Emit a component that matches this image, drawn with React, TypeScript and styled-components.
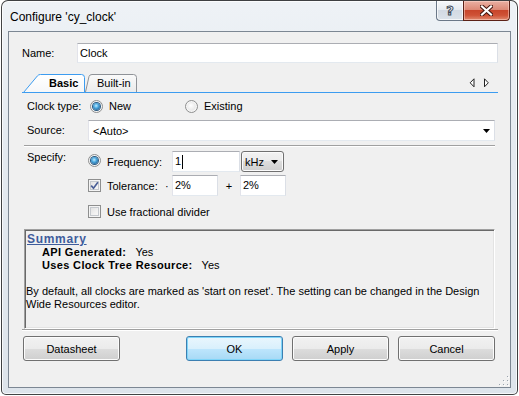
import React from "react";
import styled, { createGlobalStyle, css } from "styled-components";

const GlobalStyle = createGlobalStyle`
  html, body {
    margin: 0;
    padding: 0;
    background: #ffffff;
  }
  body {
    font-family: "Liberation Sans", Arial, sans-serif;
    font-size: 11px;
    color: #000;
  }
  * { box-sizing: border-box; }
`;

const Window = styled.div`
  margin-left: 1px;
  width: 517px;
  height: 395px;
  display: flex;
  flex-direction: column;
  padding: 0 6px 6px 6px;
  border: 1px solid rgba(0, 0, 0, 0.72);
  border-radius: 7px 7px 5px 5px;
  background: linear-gradient(180deg, #eef2f6 0%, #e4eaf0 35%, #dde4eb 100%);
  box-shadow: inset 0 0 0 1px rgba(255, 255, 255, 0.75);
`;

const TitleBar = styled.div`
  height: 30px;
  display: flex;
  align-items: flex-start;
  padding-left: 2px;
`;

const Caption = styled.div`
  margin-top: 8px;
  font-family: "Segoe UI", "Liberation Sans", Arial, sans-serif;
  font-size: 12px;
  line-height: 16px;
  color: #000;
`;

const CaptionButtons = styled.div`
  margin-left: auto;
  margin-right: 1px;
  display: flex;
  height: 20px;
`;

const HelpButton = styled.div`
  width: 27px;
  height: 20px;
  border: 1px solid #6b7888;
  border-top: none;
  border-right: none;
  border-radius: 0 0 0 4px;
  background: linear-gradient(180deg, #f6f8fa 0%, #e6ebf0 45%, #d3dae3 50%, #dce3ea 100%);
  box-shadow: inset 0 0 0 1px rgba(255, 255, 255, 0.7);
  display: flex;
  align-items: center;
  justify-content: center;
  font-family: "DejaVu Sans", sans-serif;
  font-weight: 700;
  font-size: 13px;
  color: #f4f6f8;
  -webkit-text-stroke: 1px #3e4a58;
`;

const CloseButton = styled.div`
  width: 47px;
  height: 20px;
  border: 1px solid #5b2117;
  border-top: none;
  border-radius: 0 0 4px 0;
  background: linear-gradient(180deg, #eab0a3 0%, #dd8a77 45%, #c8452b 50%, #cf5236 75%, #e08a70 100%);
  box-shadow: inset 0 0 0 1px rgba(255, 220, 210, 0.5);
  display: flex;
  align-items: center;
  justify-content: center;
`;

const Client = styled.div`
  position: relative;
  flex: 1;
  display: flex;
  flex-direction: column;
  padding: 0 12px 0 13px;
  border: 1px solid #7c8793;
  background: #f0f0f0;
`;

const NameRow = styled.div`
  margin-top: 11px;
  display: flex;
  align-items: center;
`;

const NameLabel = styled.div`
  width: 55px;
  flex: none;
`;

const TextBox = styled.div<{ $w?: number; $h?: number }>`
  ${(p) => (p.$w ? css`width: ${p.$w}px; flex: none;` : css`flex: 1;`)}
  height: ${(p) => p.$h ?? 21}px;
  display: flex;
  align-items: center;
  padding: 0 2px;
  background: #fff;
  border: 1px solid;
  border-color: #abadb3 #dbdfe6 #e3e9ef #e2e3ea;
  line-height: 13px;
  white-space: nowrap;
`;

const Caret = styled.span`
  display: inline-block;
  width: 1px;
  height: 14px;
  margin-left: 1px;
  background: #000;
`;

const TabStrip = styled.div`
  margin-top: 11px;
  height: 19px;
  padding-left: 1px;
  display: flex;
  align-items: flex-end;
  border-bottom: 1px solid #3c9cf0;
`;

const Tab = styled.div<{ $active?: boolean; $w: number; $pad: number }>`
  position: relative;
  flex: none;
  width: ${(p) => p.$w}px;
  height: 18px;
  padding-left: ${(p) => p.$pad}px;
  line-height: 19px;
  font-weight: ${(p) => (p.$active ? 700 : 400)};
  z-index: ${(p) => (p.$active ? 2 : 1)};

  & > svg {
    position: absolute;
    left: 0;
    top: 0;
    overflow: visible;
  }
  & > span {
    position: relative;
  }
`;

const TabScroll = styled.svg`
  margin-left: auto;
  margin-right: 9px;
  align-self: center;
  flex: none;
`;

const TabBody = styled.div`
  display: flex;
  flex-direction: column;
  padding: 0 3px 0 2px;
`;

const Row = styled.div<{ $top: number; $h: number }>`
  margin-top: ${(p) => p.$top}px;
  height: ${(p) => p.$h}px;
  display: flex;
  align-items: center;
`;

const RowLabel = styled.div<{ $top?: boolean }>`
  width: 64px;
  flex: none;
  padding-left: 3px;
  line-height: 13px;
  ${(p) => p.$top && css`align-self: flex-start;`}
`;

const Choice = styled.div<{ $w?: number }>`
  display: flex;
  align-items: center;
  padding-left: 2px;
  ${(p) => p.$w && css`width: ${p.$w}px; flex: none;`}
`;

const ChoiceText = styled.span`
  margin-left: 6px;
`;

const Radio = styled.span<{ $checked?: boolean; $lift?: number }>`
  position: relative;
  flex: none;
  width: 13px;
  height: 13px;
  margin-bottom: ${(p) => p.$lift ?? 0}px;
  border-radius: 50%;
  border: 1px solid #8e8f8f;
  background: radial-gradient(circle at 50% 50%, #dcdcdc 0%, #eeeeee 55%, #fbfbfb 100%);
  box-shadow: inset 0 0 0 1px #f6f6f6;

  &::after {
    content: "";
    position: absolute;
    left: 2px;
    top: 2px;
    width: 7px;
    height: 7px;
    border-radius: 50%;
    ${(p) =>
      p.$checked
        ? css`
            background: radial-gradient(circle at 45% 40%, #c4ecfd 0%, #4aa8df 40%, #1d5a8e 85%, #173f63 100%);
            box-shadow: 0 0 0 1px #2a5a82;
          `
        : css`
            background: radial-gradient(circle at 40% 35%, #ffffff 0%, #e4e4e4 100%);
          `}
  }
`;

const CheckBox = styled.span`
  flex: none;
  width: 13px;
  height: 13px;
  border: 1px solid #8e8f8f;
  background: linear-gradient(135deg, #dcdcdc 0%, #f2f2f2 60%, #fbfbfb 100%);
  box-shadow: inset 0 0 0 1px #f4f4f4, inset 0 0 0 2px #c5c9ce;
  display: flex;
  align-items: center;
  justify-content: center;
`;

const OptLabel = styled.span<{ $w?: number }>`
  margin-left: 6px;
  ${(p) => p.$w && css`width: ${p.$w}px; flex: none;`}
`;

const Symbol = styled.span<{ $w: number; $center?: boolean }>`
  width: ${(p) => p.$w}px;
  flex: none;
  text-align: ${(p) => (p.$center ? "center" : "left")};
`;

const ComboBox = styled.div`
  flex: 1;
  height: 21px;
  display: flex;
  align-items: center;
  padding: 0 4px 0 4px;
  background: #fff;
  border: 1px solid;
  border-color: #abadb3 #dbdfe6 #e3e9ef #e2e3ea;

  & > svg {
    margin-left: auto;
  }
`;

const DropButton = styled.div`
  width: 43px;
  height: 21px;
  flex: none;
  margin-left: 1px;
  display: flex;
  align-items: center;
  padding: 0 5px 0 3px;
  border: 1px solid #707070;
  border-radius: 3px;
  background: linear-gradient(180deg, #f2f2f2 0%, #ebebeb 50%, #dddddd 50%, #cfcfcf 100%);
  box-shadow: inset 0 0 0 1px #fbfbfb;

  & > svg {
    margin-left: auto;
  }
`;

const Etched = styled.div<{ $top: number; $inset?: string }>`
  margin: ${(p) => p.$top}px ${(p) => p.$inset ?? "0"};
  margin-bottom: 0;
  height: 2px;
  border-top: 1px solid #a0a0a0;
  border-bottom: 1px solid #ffffff;
`;

const Specify = styled.div`
  margin-top: 4px;
  display: flex;
`;

const Options = styled.div`
  display: flex;
  flex-direction: column;
`;

const SummaryBox = styled.div`
  margin-top: 7px;
  height: 100px;
  padding: 3px 2px 0 2px;
  border: 1px solid;
  border-color: #a0a0a0 #ffffff #ffffff #a0a0a0;
  box-shadow: inset 1px 1px 0 #696969, inset -1px -1px 0 #e3e3e3;
  line-height: 13px;
`;

const SummaryTitle = styled.div`
  font-size: 12px;
  font-weight: 700;
  letter-spacing: 0.7px;
  color: #3e5c9c;
  text-decoration: underline;
`;

const SummaryItem = styled.div`
  padding-left: 15px;

  & > b {
    letter-spacing: 0.35px;
  }
  & > span {
    margin-left: 9px;
  }
`;

const SummaryNote = styled.p`
  margin: 13px 0 0 -1px;
`;

const ButtonBar = styled.div`
  margin-top: 5px;
  display: flex;
  gap: 9px;
  padding: 0 3px 0 1px;
`;

const Button = styled.div<{ $primary?: boolean; $push?: boolean }>`
  width: 97px;
  height: 25px;
  display: flex;
  align-items: center;
  justify-content: center;
  border: 1px solid #707070;
  border-radius: 3px;
  background: linear-gradient(180deg, #f2f2f2 0%, #ebebeb 50%, #dddddd 50%, #cfcfcf 100%);
  box-shadow: inset 0 0 0 1px #fcfcfc;
  ${(p) => p.$push && css`margin-left: auto;`}
  ${(p) =>
    p.$primary &&
    css`
      border-color: #3c7fb1;
      background: linear-gradient(180deg, #eaf6fd 0%, #d9f0fc 50%, #bee6fd 50%, #a7d9f5 100%);
      box-shadow: inset 0 0 0 1px #7fd5f9;
    `}
`;

const Grip = styled.svg`
  position: absolute;
  right: 1px;
  bottom: 1px;
`;

const GripDots = [
  [9, 1],
  [9, 5],
  [5, 5],
  [9, 9],
  [5, 9],
  [1, 9],
];

const DownArrow = ({ w = 7 }: { w?: number }) => (
  <svg width={w} height={4} viewBox={`0 0 ${w} 4`}>
    <polygon points={`0,0 ${w},0 ${w / 2},4`} fill="#000" />
  </svg>
);

const CheckMark = () => (
  <svg width={9} height={9} viewBox="0 0 9 9">
    <path d="M1.2,4.6 L3.5,7.2 L7.9,1.3" fill="none" stroke="#4a5f97" strokeWidth={1.7} />
  </svg>
);

export default function App() {
  return (
    <>
      <GlobalStyle />
      <Window>
        <TitleBar>
          <Caption>Configure 'cy_clock'</Caption>
          <CaptionButtons>
            <HelpButton>?</HelpButton>
            <CloseButton>
              <svg width={13} height={11} viewBox="0 0 13 11">
                <path d="M2,1.5 L11,9.5 M11,1.5 L2,9.5" stroke="#43170f" strokeWidth={4.2} strokeLinecap="square" />
                <path d="M2,1.5 L11,9.5 M11,1.5 L2,9.5" stroke="#ffffff" strokeWidth={2.2} strokeLinecap="square" />
              </svg>
            </CloseButton>
          </CaptionButtons>
        </TitleBar>

        <Client>
          <NameRow>
            <NameLabel>Name:</NameLabel>
            <TextBox $h={20}>Clock</TextBox>
          </NameRow>

          <TabStrip>
            <Tab $active $w={62} $pad={26}>
              <svg width={62} height={18}>
                <defs>
                  <linearGradient id="tabOn" x1="0" y1="0" x2="0" y2="1">
                    <stop offset="0" stopColor="#ffffff" />
                    <stop offset="1" stopColor="#f6f7f8" />
                  </linearGradient>
                </defs>
                <path
                  d="M0.5,18.5 L14.5,1.8 Q15.5,0.5 17.5,0.5 L58.5,0.5 Q61.5,0.5 61.5,3.5 L61.5,18.5 Z"
                  fill="url(#tabOn)"
                  stroke="#3c9cf0"
                />
              </svg>
              <span>Basic</span>
            </Tab>
            <Tab $w={52} $pad={12}>
              <svg width={52} height={18}>
                <defs>
                  <linearGradient id="tabOff" x1="0" y1="0" x2="0" y2="1">
                    <stop offset="0" stopColor="#fafafa" />
                    <stop offset="1" stopColor="#ebebeb" />
                  </linearGradient>
                </defs>
                <path
                  d="M0.5,18 L4,2.5 Q4.6,0.5 7,0.5 L48.5,0.5 Q51.5,0.5 51.5,3.5 L51.5,18"
                  fill="url(#tabOff)"
                  stroke="#8f9297"
                />
              </svg>
              <span>Built-in</span>
            </Tab>
            <TabScroll width={20} height={10} viewBox="0 0 20 10">
              <polygon points="5,0.8 1.2,4.8 5,8.8" fill="#fff" stroke="#222" strokeWidth={1} />
              <polygon points="15.5,0.8 19.3,4.8 15.5,8.8" fill="#fff" stroke="#222" strokeWidth={1} />
            </TabScroll>
          </TabStrip>

          <TabBody>
            <Row $top={6} $h={14}>
              <RowLabel>Clock type:</RowLabel>
              <Choice $w={95}>
                <Radio $checked />
                <ChoiceText>New</ChoiceText>
              </Choice>
              <Choice>
                <Radio />
                <ChoiceText>Existing</ChoiceText>
              </Choice>
            </Row>

            <Row $top={7} $h={21}>
              <RowLabel>Source:</RowLabel>
              <ComboBox>
                &lt;Auto&gt;
                <DownArrow />
              </ComboBox>
            </Row>

            <Etched $top={4} />

            <Specify>
              <RowLabel $top>Specify:</RowLabel>
              <Options>
                <Row $top={0} $h={21}>
                  <Radio $checked $lift={3} />
                  <OptLabel $w={65}>Frequency:</OptLabel>
                  <TextBox $w={68}>
                    1<Caret />
                  </TextBox>
                  <DropButton>
                    kHz
                    <DownArrow />
                  </DropButton>
                </Row>
                <Row $top={3} $h={21}>
                  <CheckBox>
                    <CheckMark />
                  </CheckBox>
                  <OptLabel $w={58}>Tolerance:</OptLabel>
                  <Symbol $w={7}>·</Symbol>
                  <TextBox $w={46}>2%</TextBox>
                  <Symbol $w={22} $center>
                    +
                  </Symbol>
                  <TextBox $w={46}>2%</TextBox>
                </Row>
                <Row $top={5} $h={21}>
                  <CheckBox />
                  <OptLabel>Use fractional divider</OptLabel>
                </Row>
              </Options>
            </Specify>

            <SummaryBox>
              <SummaryTitle>Summary</SummaryTitle>
              <SummaryItem>
                <b>API Generated:</b>
                <span>Yes</span>
              </SummaryItem>
              <SummaryItem>
                <b>Uses Clock Tree Resource:</b>
                <span>Yes</span>
              </SummaryItem>
              <SummaryNote>
                By default, all clocks are marked as 'start on reset'. The setting can be changed in the Design
                <br />
                Wide Resources editor.
              </SummaryNote>
            </SummaryBox>
          </TabBody>

          <Etched $top={11} $inset="2px 1px 0 2px" />

          <ButtonBar>
            <Button>Datasheet</Button>
            <Button $primary $push>
              OK
            </Button>
            <Button>Apply</Button>
            <Button>Cancel</Button>
          </ButtonBar>

          <Grip width={11} height={11} viewBox="0 0 11 11">
            {GripDots.map(([x, y]) => (
              <g key={`${x}-${y}`}>
                <rect x={x + 1} y={y + 1} width={1} height={1} fill="#ffffff" />
                <rect x={x} y={y} width={1} height={1} fill="#9aa3ad" />
              </g>
            ))}
          </Grip>
        </Client>
      </Window>
    </>
  );
}
